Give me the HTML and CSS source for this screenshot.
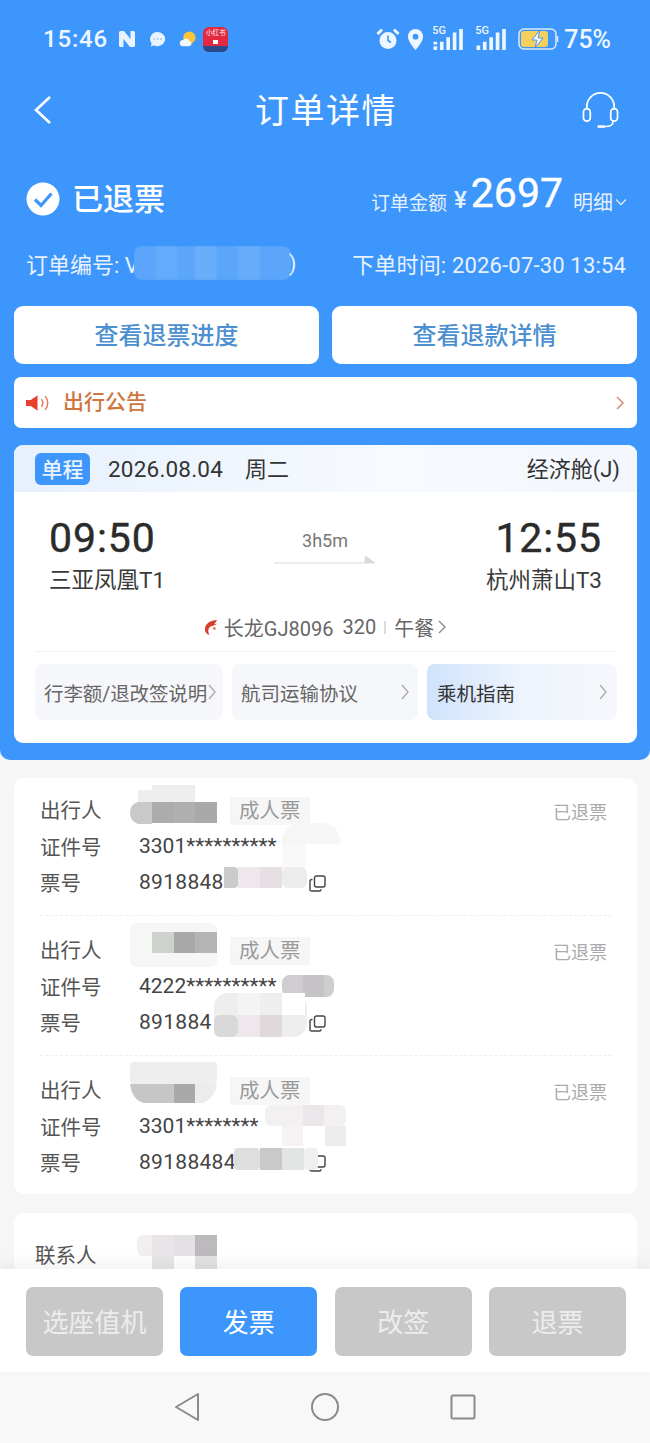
FILE: index.html
```html
<!DOCTYPE html>
<html lang="zh-CN">
<head>
<meta charset="utf-8">
<title>订单详情</title>
<link rel="stylesheet" href="styles.css">
</head>
<body>
<div class="screen">
  <div class="scroll">
    <header class="hero">
      <div class="statusbar">
        <div class="status-left">
          <span class="clock">15:46</span>
          <svg class="ico-nfc" viewBox="0 0 18 18"><path d="M2.500 1h3.500l6.500 8V1h3a1.500 1.500 0 0 1 1.500 1.500v13A1.500 1.500 0 0 1 15.500 17H12L5.500 9v8h-3A1.500 1.500 0 0 1 1 15.500v-13A1.500 1.500 0 0 1 2.500 1z" fill="#e8f3ff"/></svg>
          <svg class="ico-msg" viewBox="0 0 20 20"><path d="M10 2a8 7.500 0 1 1-4 14l-3 1.500.8-3.500A8 7.500 0 0 1 10 2z" fill="#e8f3ff"/><circle cx="6.500" cy="9.500" r="1" fill="#9cc8f5"/><circle cx="10" cy="9.500" r="1" fill="#9cc8f5"/><circle cx="13.500" cy="9.500" r="1" fill="#9cc8f5"/></svg>
          <svg class="ico-sun" viewBox="0 0 20 20"><circle cx="12" cy="8" r="6.500" fill="#f8c53a"/><path d="M5 17a3.200 3.200 0 0 1 .2-6.400A3.800 3.800 0 0 1 12 11.500a2.800 2.800 0 0 1 0 5.500z" fill="#f4f7fb"/></svg>
          <span class="app-red"><span class="app-red-text">小红书</span><i class="app-red-mark"></i><i class="app-red-band"></i></span>
        </div>
        <div class="status-right">
          <svg class="ico-alarm" viewBox="0 0 24 24"><circle cx="12" cy="13.500" r="8.500" fill="#eef6ff"/><path d="M12 8.500v5l3 2" fill="none" stroke="#3d96fb" stroke-width="1.600"/><path d="M1.500 7 6 2.500M22.500 7 18 2.500" stroke="#eef6ff" stroke-width="3"/></svg>
          <svg class="ico-pin" viewBox="0 0 18 24"><path d="M9 1a8 8 0 0 1 8 8c0 5.500-8 14-8 14S1 14.500 1 9a8 8 0 0 1 8-8z" fill="#eef6ff"/><circle cx="9" cy="9" r="3" fill="#3d96fb"/></svg>
          <span class="signal"><span class="fiveg">5G</span><svg viewBox="0 0 36 24"><path d="M0 15h4v3H0zM0 20h4v4H0zM7 15h4v9H7zM14 10h4v14h-4zM21 5h4v19h-4zM28 1h4v23h-4z" fill="#eef6ff"/></svg></span>
          <span class="signal"><span class="fiveg">5G</span><svg viewBox="0 0 36 24"><path d="M0 19h4v5H0zM7 15h4v9H7zM14 10h4v14h-4zM21 5h4v19h-4zM28 1h4v23h-4z" fill="#eef6ff"/></svg></span>
          <svg class="ico-batt" viewBox="0 0 42 22"><rect x="1" y="1" width="37" height="20" rx="5" fill="none" stroke="#d9e9fb" stroke-width="1.500"/><rect x="3" y="3" width="27" height="16" rx="3" fill="#f4cf5c"/><path d="M39.500 8v6" stroke="#d9e9fb" stroke-width="1.500"/><path d="M22 2 14 12h5l-2 8 8-10h-5z" fill="#fff" stroke="#3d96fb"/></svg>
          <span class="pct">75%</span>
        </div>
      </div>

      <nav class="navbar">
        <svg class="ico-back" viewBox="0 0 20 30"><path d="M17 2 3 15l14 13" fill="none" stroke="#fff" stroke-width="2.600"/></svg>
        <h1 class="title">订单详情</h1>
        <svg class="ico-head" viewBox="0 0 38 38"><path d="M5 18v-3a14 14 0 0 1 28 0v3" fill="none" stroke="#fff" stroke-width="1.800"/><rect x="1.500" y="17" width="7" height="13" rx="3.500" fill="none" stroke="#fff" stroke-width="1.800"/><rect x="29.500" y="17" width="7" height="13" rx="3.500" fill="none" stroke="#fff" stroke-width="1.800"/><path d="M32 30c0 4-3 5.500-8 5.500" fill="none" stroke="#fff" stroke-width="1.600"/><path d="M16 35.500h8" stroke="#fff" stroke-width="2.600"/></svg>
      </nav>

      <div class="summary">
        <div class="state">
          <svg class="ico-check" viewBox="0 0 34 34"><circle cx="17" cy="17" r="16.500" fill="#fff"/><path d="M9 17.500l6 6 10.500-12" fill="none" stroke="#3d96fb" stroke-width="3.200"/></svg>
          <span class="state-text">已退票</span>
        </div>
        <div class="amount">
          <span class="amount-label">订单金额</span>
          <span class="amount-yen">¥</span>
          <span class="amount-num">2697</span>
          <span class="amount-more">明细</span>
          <svg class="ico-caret" viewBox="0 0 12 8"><path d="M1 1.500l5 5 5-5" fill="none" stroke="#dcebfd" stroke-width="1.300"/></svg>
        </div>
      </div>

      <div class="meta">
        <div class="order-no">订单编号: V<svg class="order-blur" viewBox="0 0 160 34"><rect width="160" height="34" y="0" rx="8" fill="#5ba6fb"/><rect x="22" width="22" height="34" fill="#63abfb"/><rect x="62" width="22" height="34" fill="#69aefb"/><rect x="106" width="22" height="34" fill="#65acfb"/></svg>)</div>
        <div class="order-time">下单时间: 2026-07-30 13:54</div>
      </div>

      <div class="actions">
        <a class="action">查看退票进度</a>
        <a class="action">查看退款详情</a>
      </div>

      <div class="notice">
        <svg class="ico-horn" viewBox="0 0 26 18"><path d="M0 6h5l7-5v16l-7-5H0z" fill="#e8402e"/><path d="M16 5c2 2.500 2 5.500 0 8M20 2c3.500 4 3.500 10 0 14" fill="none" stroke="#e8775a" stroke-width="1.500"/></svg>
        <span class="notice-text">出行公告</span>
        <svg class="ico-chev notice-chev" viewBox="0 0 10 16"><path d="M2 2l6 6-6 6" fill="none" stroke="#d98a78" stroke-width="1.500"/></svg>
      </div>

      <section class="flight">
        <div class="flight-head">
          <span class="tag">单程</span>
          <span class="date">2026.08.04</span>
          <span class="week">周二</span>
          <span class="cabin">经济舱(J)</span>
        </div>
        <div class="route">
          <div class="point">
            <div class="time">09:50</div>
            <div class="airport">三亚凤凰T1</div>
          </div>
          <div class="duration">
            <span class="dur-text">3h5m</span>
            <svg class="arrow" viewBox="0 0 104 10"><path d="M0 8h102L92 1v7" fill="#d9d9d9" stroke="#d9d9d9"/></svg>
          </div>
          <div class="point point-end">
            <div class="time">12:55</div>
            <div class="airport">杭州萧山T3</div>
          </div>
        </div>
        <div class="carrier">
          <svg class="ico-logo" viewBox="0 0 16 18"><path d="M14 1C7 1 1 5 1 11c0 3 2 5 5 6-2-3-2-7 1-9 2-1 5-1 7-3l-3 .5z" fill="#d8402e"/><circle cx="11" cy="10" r="1.500" fill="#e8775a"/></svg>
          <span>长龙GJ8096</span><span class="carrier-type">320</span><i class="carrier-sep"></i><span>午餐</span>
          <svg class="ico-chev-sm" viewBox="0 0 10 16"><path d="M2 2l6 6-6 6" fill="none" stroke="#888" stroke-width="1.300"/></svg>
        </div>
        <div class="links">
          <a class="link link-a">行李额/退改签说明<svg class="link-chev" viewBox="0 0 10 18"><path d="M2 2l6 7-6 7" fill="none" stroke="#aaa" stroke-width="1.300"/></svg></a>
          <a class="link link-b">航司运输协议<svg class="link-chev" viewBox="0 0 10 18"><path d="M2 2l6 7-6 7" fill="none" stroke="#aaa" stroke-width="1.300"/></svg></a>
          <a class="link link-c">乘机指南<svg class="link-chev" viewBox="0 0 10 18"><path d="M2 2l6 7-6 7" fill="none" stroke="#aaa" stroke-width="1.300"/></svg></a>
        </div>
      </section>
    </header>

    <section class="card passengers">
      <article class="pax">
        <div class="pax-row"><span class="pax-label">出行人</span><span class="pax-name"></span><span class="pax-type">成人票</span><span class="pax-state">已退票</span></div>
        <div class="pax-row"><span class="pax-label">证件号</span><span class="pax-val">3301**********</span></div>
        <div class="pax-row"><span class="pax-label">票号</span><span class="pax-val pax-ticket">8918848</span><svg class="ico-copy" viewBox="0 0 17 17"><rect x="5.500" y="1" width="10.500" height="11" rx="2" fill="none" stroke="#444" stroke-width="1.400"/><path d="M3.500 4.500H2.800A1.800 1.800 0 0 0 1 6.300v8.900A1.800 1.800 0 0 0 2.800 16h7.400a1.800 1.800 0 0 0 1.800-1.800" fill="none" stroke="#444" stroke-width="1.400"/></svg></div>
      </article>
      <article class="pax">
        <div class="pax-row"><span class="pax-label">出行人</span><span class="pax-name"></span><span class="pax-type">成人票</span><span class="pax-state">已退票</span></div>
        <div class="pax-row"><span class="pax-label">证件号</span><span class="pax-val">4222**********</span></div>
        <div class="pax-row"><span class="pax-label">票号</span><span class="pax-val pax-ticket">891884</span><svg class="ico-copy" viewBox="0 0 17 17"><rect x="5.500" y="1" width="10.500" height="11" rx="2" fill="none" stroke="#444" stroke-width="1.400"/><path d="M3.500 4.500H2.800A1.800 1.800 0 0 0 1 6.300v8.900A1.800 1.800 0 0 0 2.800 16h7.400a1.800 1.800 0 0 0 1.800-1.800" fill="none" stroke="#444" stroke-width="1.400"/></svg></div>
      </article>
      <article class="pax">
        <div class="pax-row"><span class="pax-label">出行人</span><span class="pax-name"></span><span class="pax-type">成人票</span><span class="pax-state">已退票</span></div>
        <div class="pax-row"><span class="pax-label">证件号</span><span class="pax-val">3301********</span></div>
        <div class="pax-row"><span class="pax-label">票号</span><span class="pax-val pax-ticket">89188484</span><svg class="ico-copy" viewBox="0 0 17 17"><rect x="5.500" y="1" width="10.500" height="11" rx="2" fill="none" stroke="#444" stroke-width="1.400"/><path d="M3.500 4.500H2.800A1.800 1.800 0 0 0 1 6.300v8.900A1.800 1.800 0 0 0 2.800 16h7.400a1.800 1.800 0 0 0 1.800-1.800" fill="none" stroke="#444" stroke-width="1.400"/></svg></div>
      </article>
      <svg class="mosaic" viewBox="14 778 623 416">
        <path d="M152 785h43v17h-43zM138 790h14v12h-14z" fill="#eeeeee"/>
        <path d="M152 802H138q-8 2-8 11 0 8 8 11h14z" fill="#c9c9c9"/>
        <rect x="152" y="802" width="22" height="21" fill="#acacac"/><rect x="174" y="802" width="21" height="21" fill="#b0b0b0"/><rect x="195" y="802" width="22" height="21" fill="#a9a9a9"/>
        <path d="M282 838q4-14 18-15h22q14 0 18 15v6h-58z" fill="#f6f6f6"/><rect x="282" y="844" width="24" height="24" fill="#f9f9f9"/>
        <path d="M234 867h-10v21h10z" fill="#c9c9c9"/><rect x="238" y="867" width="22" height="21" fill="#eee8ec"/><rect x="260" y="867" width="22" height="21" fill="#e6dfe4"/><rect x="282" y="867" width="25" height="21" rx="6" fill="#ececec"/><rect x="224" y="867" width="14" height="21" rx="4" fill="#cbcbcb"/>
        <rect x="130" y="923" width="87" height="44" rx="6" fill="#f6f6f6"/>
        <rect x="152" y="932" width="22" height="21" fill="#cdd2cd"/><rect x="174" y="932" width="21" height="21" fill="#a9a9a9"/><rect x="195" y="932" width="22" height="21" fill="#b4b4b4"/>
        <rect x="282" y="975" width="52" height="22" rx="8" fill="#cfcdd0"/><rect x="303" y="975" width="21" height="22" fill="#c5c3c6"/>
        <rect x="214" y="993" width="93" height="44" rx="14" fill="#eeeeee"/><rect x="238" y="993" width="22" height="22" fill="#f4f4f4"/><rect x="282" y="993" width="23" height="22" fill="#ffffff"/>
        <rect x="214" y="1015" width="24" height="22" rx="6" fill="#d9d9d9"/><rect x="238" y="1015" width="22" height="22" fill="#eee7eb"/><rect x="260" y="1015" width="22" height="22" fill="#dfd9dc"/>
        <rect x="130" y="1062" width="87" height="22" rx="4" fill="#eeeeee"/>
        <path d="M130 1084h44v19h-30q-12-3-14-19z" fill="#c6c6c6"/><rect x="174" y="1084" width="21" height="19" fill="#a9a9a9"/><path d="M195 1084h22q-2 14-14 19h-8z" fill="#ececec"/>
        <rect x="265" y="1105" width="81" height="21" rx="6" fill="#f3f0f2"/><rect x="303" y="1105" width="21" height="21" fill="#ebe6e9"/><rect x="282" y="1126" width="21" height="20" fill="#f4f2f3"/><rect x="325" y="1126" width="21" height="20" fill="#ececee"/>
        <rect x="234" y="1148" width="26" height="22" rx="4" fill="#dedede"/><rect x="260" y="1148" width="22" height="22" fill="#c9c8ca"/><rect x="282" y="1148" width="22" height="22" fill="#e1e6e4"/><rect x="304" y="1148" width="14" height="22" rx="4" fill="#efefef"/>
      </svg>
    </section>

    <section class="card contact">
      <span class="contact-label">联系人</span>
      <svg class="mosaic" viewBox="14 1213 623 60">
        <rect x="137" y="1235" width="80" height="21" rx="6" fill="#f1eef0"/><rect x="152" y="1235" width="22" height="21" fill="#e9e4e7"/><rect x="174" y="1235" width="21" height="21" fill="#e4e1e4"/><rect x="195" y="1235" width="22" height="21" fill="#bdbabd"/>
        <rect x="152" y="1256" width="22" height="14" fill="#e8e5e7"/><rect x="195" y="1256" width="22" height="14" fill="#e2e2e3"/>
      </svg>
    </section>
  </div>

  <footer class="footer">
    <a class="btn">选座值机</a>
    <a class="btn btn-primary">发票</a>
    <a class="btn">改签</a>
    <a class="btn">退票</a>
  </footer>

  <div class="sysnav">
    <svg class="sys-back" viewBox="0 0 26 30"><path d="M24 2v26L2 15z" fill="none" stroke="#8a8a8a" stroke-width="2" stroke-linejoin="round"/></svg>
    <svg class="sys-home" viewBox="0 0 28 28"><circle cx="14" cy="14" r="13" fill="none" stroke="#8a8a8a" stroke-width="2"/></svg>
    <svg class="sys-recent" viewBox="0 0 26 26"><rect x="1.500" y="1.500" width="23" height="23" rx="1.500" fill="none" stroke="#8a8a8a" stroke-width="2"/></svg>
  </div>
</div>
</body>
</html>
```
FILE: styles.css
```css
* { box-sizing: border-box; }
html, body { margin: 0; padding: 0; }
body {
  width: 650px;
  height: 1443px;
  overflow: hidden;
  font-family: Roboto, "Noto Sans CJK SC", sans-serif;
  color: #333;
  background: #f6f6f6;
}
svg { display: block; flex: none; }
.screen { display: flex; flex-direction: column; height: 1443px; }
.scroll { flex: 1; min-height: 0; overflow: hidden; background: #f6f6f6; }

.hero {
  background: #3d96fb;
  padding: 0 13px 17px 14px;
  border-radius: 0 0 10px 10px;
  color: #fff;
}

.statusbar { height: 78px; display: flex; align-items: center; justify-content: space-between; padding: 0 26px 0 29px; color: #eef6ff; }
.status-left, .status-right { display: flex; align-items: center; }
.clock { font-size: 24px; font-weight: 500; letter-spacing: .800px; margin-right: 10px; }
.ico-nfc { width: 18px; height: 18px; margin-right: 12px; }
.ico-msg { width: 19px; height: 19px; margin-right: 11px; }
.ico-sun { width: 19px; height: 19px; margin-right: 6px; }
.app-red { width: 25px; height: 25px; border-radius: 6px; background: #e4283f; position: relative; overflow: hidden; display: block; }
.app-red-text { position: absolute; left: 3px; top: 2px; font-size: 6.500px; line-height: 9px; color: #fff; white-space: nowrap; }
.app-red-mark { position: absolute; left: 10px; top: 13px; width: 5px; height: 4px; background: #fff; }
.app-red-band { position: absolute; left: 0; right: 0; bottom: 0; height: 6px; background: #2b4a8c; }
.ico-alarm { width: 24px; height: 24px; margin-right: 7px; }
.ico-pin { width: 17px; height: 23px; margin-right: 8px; }
.signal { position: relative; width: 36px; height: 22px; margin-right: 7px; }
.signal svg { width: 36px; height: 22px; }
.fiveg { position: absolute; left: 0; top: -3px; font-size: 11px; line-height: 12px; font-weight: 500; }
.ico-batt { width: 42px; height: 22px; margin-right: 4px; }
.pct { font-size: 25px; font-weight: 500; }

.navbar { height: 64px; display: flex; align-items: center; justify-content: space-between; padding: 0 18px 0 19px; position: relative; }
.ico-back { width: 20px; height: 30px; }
.title { margin: 2px 0 0; font-size: 34px; font-weight: 400; letter-spacing: 1.500px; line-height: 1; position: absolute; left: 241px; }
.ico-head { width: 37px; height: 37px; }

.summary { height: 56px; margin-top: 29px; display: flex; align-items: center; justify-content: space-between; padding: 0 10px 0 12px; }
.state { display: flex; align-items: center; gap: 12px; }
.ico-check { width: 34px; height: 34px; }
.state-text { font-size: 31px; font-weight: 500; line-height: 1; }
.amount { display: flex; align-items: center; color: #e6f1ff; }
.amount-label { font-size: 19px; margin-right: 7px; margin-top: 4px; }
.amount-yen { font-size: 24px; margin-right: 4px; font-weight: 500; margin-top: 2px; }
.amount-num { font-size: 41px; font-weight: 400; color: #fff; margin-right: 10px; line-height: 1; margin-top: -11px; -webkit-text-stroke: .4px #fff; }
.amount-more { font-size: 20px; margin-top: 4px; margin-right: 2px; }
.ico-caret { width: 12px; height: 8px; margin-top: 6px; }

.meta { height: 40px; margin-top: 16px; display: flex; align-items: center; justify-content: space-between; padding: 0 11px 0 12px; font-size: 22px; color: #e8f2ff; }
.order-no { display: flex; align-items: center; }
.order-blur { width: 157px; height: 34px; margin-left: -5px; margin-right: -2px; }
.order-time { letter-spacing: .170px; }

.actions { margin-top: 23px; display: grid; grid-template-columns: 305px 305px; gap: 13px; }
.action {
  height: 58px; background: #fff; border-radius: 9px;
  display: flex; align-items: center; justify-content: center;
  font-size: 24px; color: #4d90d0; font-weight: 500; padding-bottom: 3px;
}

.notice { margin-top: 13px; height: 51px; background: #fff; border-radius: 7px; display: flex; align-items: center; padding: 0 12px; }
.ico-horn { width: 25px; height: 18px; margin-right: 12px; }
.notice-text { font-size: 21px; color: #cf7640; font-weight: 500; margin-bottom: 6px; }
.notice-chev { width: 10px; height: 16px; margin-left: auto; }

.flight { margin-top: 17px; height: 298px; background: #fff; border-radius: 9px; color: #333; overflow: hidden; }
.flight-head {
  height: 47px; display: flex; align-items: center; padding: 0 17px 0 21px;
  background: linear-gradient(90deg, #e6f1fd, #f7fafe 60%, #f3f7fd);
}
.tag { width: 55px; height: 32px; border-radius: 6px; background: #3d96fb; color: #eaf3ff; font-size: 21px; font-weight: 500; display: flex; align-items: center; justify-content: center; margin-right: 18px; padding-bottom: 2px; }
.date { font-size: 22.500px; margin-right: 18px; letter-spacing: .200px; }
.week { font-size: 22px; margin-left: 4px; margin-bottom: 3px; }
.cabin { margin-left: auto; font-size: 22px; margin-bottom: 3px; }

.route { display: flex; justify-content: space-between; padding: 23px 35px 0 35px; height: 113px; }
.point-end { text-align: right; }
.time { font-size: 41px; font-weight: 400; line-height: 46px; color: #2b2b2b; letter-spacing: .900px; -webkit-text-stroke: .4px #2b2b2b; }
.airport { font-size: 22.500px; line-height: 30px; margin-top: 4px; color: #3a3a3a; }
.duration { display: flex; flex-direction: column; align-items: center; padding-top: 15px; margin-left: -1px; }
.dur-text { font-size: 18px; line-height: 21px; color: #777; }
.arrow { width: 103px; height: 10px; margin-top: 4px; }

.carrier { height: 28px; margin-top: 8px; display: flex; align-items: center; justify-content: center; font-size: 20px; color: #666; }
.ico-logo { width: 15px; height: 17px; margin-right: 5px; }
.carrier-type { margin-left: 9px; }
.carrier-sep { width: 2px; height: 13px; background: #ddd; margin: 0 8px; }
.ico-chev-sm { width: 10px; height: 16px; margin-left: 3px; }

.links {
  margin: 10px 20px 0 21px; padding-top: 12px; border-top: 1px solid #f2f2f4;
  display: grid; grid-template-columns: 188px 186px 190px; gap: 9px;
}
.link { height: 56px; border-radius: 8px; background: #f6f7fb; display: flex; align-items: center; justify-content: space-between; padding: 0 7px 0 9px; font-size: 19.500px; color: #666; white-space: nowrap; }
.link-a { padding-right: 6px; letter-spacing: -.100px; }
.link-b { padding-right: 8px; }
.link-c { background: linear-gradient(90deg, #cfe3fb, #eef4fd 50%, #f6f7fb); color: #333; padding: 0 9px 0 10px; }
.link-chev { width: 10px; height: 18px; }

.card { background: #fff; border-radius: 10px; margin: 0 13px 0 14px; position: relative; }
.passengers { display: flow-root; margin-top: 18px; height: 416px; padding: 0 25px 0 26px; }
.pax { height: 140px; padding-top: 15px; border-bottom: 1px dashed #eeeeee; }
.pax:first-child { margin-top: -2px; }
.pax:last-of-type { border-bottom: 0; }
.pax-row { height: 36.500px; display: flex; align-items: center; font-size: 20.500px; color: #555; position: relative; }
.pax-label { width: 99px; flex: none; }
.pax-name { width: 91px; flex: none; }
.pax-type { background: #f6f6f6; color: #9a9a9a; font-size: 20.500px; line-height: 28px; padding: 0 9px; margin-top: 4px; }
.pax-state { margin-left: auto; margin-right: 5px; font-size: 18px; color: #aaa; margin-top: 4px; }
.pax-val { font-size: 21px; color: #444; }
.pax-ticket { letter-spacing: .300px; }
.ico-copy { width: 17px; height: 17px; position: absolute; left: 269px; top: 11px; }
.mosaic { position: absolute; inset: 0; width: 100%; height: 100%; pointer-events: none; }

.contact { margin-top: 19px; height: 120px; padding: 25px 21px; }
.contact .mosaic { height: 60px; }
.contact-label { font-size: 20.500px; color: #555; line-height: 30px; position: relative; top: 3px; }

.footer {
  height: 103px; flex: none; background: #fff; display: grid;
  grid-template-columns: repeat(4, 137px); column-gap: 17.330px; padding: 18px 24px 16px 26px;
  box-shadow: 0 -6px 14px rgba(0, 0, 0, .05); position: relative;
}
.btn { background: #c8c8c8; border-radius: 7px; color: #ededed; font-size: 26px; display: flex; align-items: center; justify-content: center; padding-bottom: 2px; }
.btn-primary { background: #3d96fb; color: #fff; }

.sysnav { height: 71px; flex: none; background: #f8f8f8; display: flex; align-items: center; padding-bottom: 2px; }
.sys-back { width: 26px; height: 30px; margin-left: 174px; }
.sys-home { width: 28px; height: 28px; margin-left: 111px; }
.sys-recent { width: 26px; height: 26px; margin-left: 111px; }
```
